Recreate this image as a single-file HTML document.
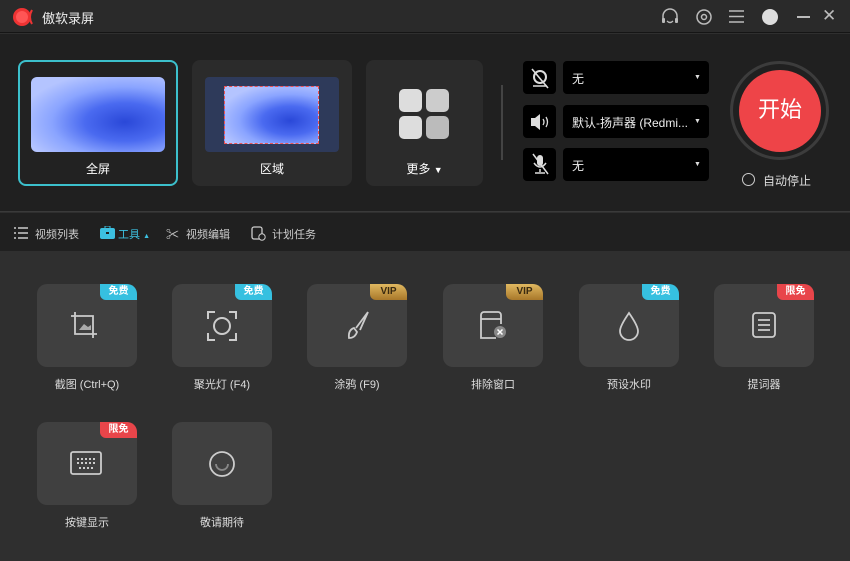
<!DOCTYPE html><html><head><meta charset="utf-8"><style>
*{margin:0;padding:0;box-sizing:border-box}
body{width:850px;height:561px;background:#2f2f2f;font-family:"Liberation Sans","Noto Sans CJK SC",sans-serif;color:#ddd;position:relative;overflow:hidden;font-size:12px}
.a{position:absolute}
.title{left:0;top:0;width:850px;height:33px;background:#2a2a2a;border-bottom:1px solid #151515}
.top{left:0;top:34px;width:850px;height:178px;background:#202020;border-bottom:1px solid #3a3a3a}
.nav{left:0;top:213px;width:850px;height:38px;background:#202020}
.card{background:#2b2b2b;border-radius:8px}
.tile{width:100px;height:83px;background:#404040;border-radius:10px}
.lbl{width:100px;text-align:center;font-size:11px;color:#ddd}
.badge{position:absolute;right:0;top:0;width:37px;height:16px;border-radius:0 10px 0 6px;font-size:10px;text-align:center;line-height:16px;color:#fff;font-weight:bold}
.free{background:#36c0e0}.vip{background:linear-gradient(#e0b860,#a8782a);color:#3a2a10}.lim{background:#e8454a}
.sel{background:#000;border-radius:4px}
.ic svg{position:absolute}
.wave{background:radial-gradient(ellipse at 70% 60%,#2a48d8 0,#4a6af0 30%,#8aa4ff 55%,#b4c4ff 80%)}
</style></head><body>
<div class="a title">
 <svg class="a" style="left:12px;top:6px" width="26" height="22"><circle cx="10" cy="11" r="9" fill="#e33"/><circle cx="10" cy="11" r="6" fill="#f55"/><path d="M20 4 Q16 11 20 18" stroke="#e33" stroke-width="2" fill="none"/></svg>
 <div class="a" style="left:42px;top:8px;font-size:13px;color:#eee">傲软录屏</div>
 <svg class="a" style="left:660px;top:8px" width="20" height="18"><path d="M3 11 V8 a7 7 0 0 1 14 0 V11" stroke="#bbb" stroke-width="1.5" fill="none"/><rect x="2" y="10" width="3" height="5" rx="1" fill="#bbb"/><rect x="15" y="10" width="3" height="5" rx="1" fill="#bbb"/><path d="M7 13 q3 3 6 0" stroke="#bbb" stroke-width="1.3" fill="none"/></svg>
 <svg class="a" style="left:694px;top:7px" width="20" height="20"><circle cx="10" cy="10" r="7" stroke="#bbb" stroke-width="1.5" fill="none"/><circle cx="10" cy="10" r="2.5" stroke="#bbb" stroke-width="1.5" fill="none"/></svg>
 <svg class="a" style="left:728px;top:9px" width="17" height="15"><path d="M1 2H16M1 7.5H16M1 13H16" stroke="#bbb" stroke-width="1.5"/></svg>
 <div class="a" style="left:762px;top:9px;width:16px;height:16px;border-radius:50%;background:#ddd"></div>
 <div class="a" style="left:797px;top:16px;width:13px;height:1.5px;background:#bbb"></div>
 <div class="a" style="left:822px;top:6px;font-size:17px;color:#bbb">✕</div>
</div>
<div class="a top"></div>
<div class="a card" style="left:18px;top:60px;width:160px;height:126px;border:2px solid #3cc0cc;background:#222"></div>
<div class="a wave" style="left:31px;top:77px;width:134px;height:75px;border-radius:6px"></div>
<div class="a" style="left:18px;top:160px;width:160px;text-align:center;color:#fff">全屏</div>
<div class="a card" style="left:192px;top:60px;width:160px;height:126px"></div>
<div class="a" style="left:205px;top:77px;width:134px;height:75px;border-radius:4px;background:#2e3a5a"></div>
<div class="a wave" style="left:224px;top:86px;width:95px;height:58px;border:1px dashed #e55"></div>
<div class="a" style="left:192px;top:160px;width:160px;text-align:center;color:#fff">区域</div>
<div class="a card" style="left:366px;top:60px;width:117px;height:126px"></div>
<svg class="a" style="left:399px;top:89px" width="51" height="51"><rect x="0" y="0" width="23" height="23" rx="5" fill="#ddd"/><rect x="27" y="0" width="23" height="23" rx="5" fill="#ccc"/><rect x="0" y="27" width="23" height="23" rx="5" fill="#ddd"/><rect x="27" y="27" width="23" height="23" rx="5" fill="#bbb"/></svg>
<div class="a" style="left:366px;top:160px;width:117px;text-align:center;color:#fff">更多 <span style="font-size:9px">▼</span></div>
<div class="a" style="left:501px;top:85px;width:2px;height:75px;background:#444"></div>
<div class="a sel" style="left:523px;top:61px;width:33px;height:33px"></div>
<div class="a sel" style="left:523px;top:105px;width:33px;height:33px"></div>
<div class="a sel" style="left:523px;top:148px;width:33px;height:33px"></div>
<svg class="a" style="left:529px;top:66px" width="22" height="24"><circle cx="11" cy="11" r="6" stroke="#ddd" stroke-width="2" fill="none"/><path d="M4 20H18M3 3L19 22" stroke="#ddd" stroke-width="1.6"/></svg>
<svg class="a" style="left:529px;top:112px" width="22" height="20"><path d="M2 6H6L11 2V18L6 14H2Z" fill="#ddd"/><path d="M14 7q2 3 0 6M17 5q3 5 0 10" stroke="#ddd" stroke-width="1.3" fill="none"/></svg>
<svg class="a" style="left:529px;top:152px" width="22" height="24"><rect x="8" y="3" width="6" height="11" rx="3" fill="#ddd"/><path d="M5 11q6 8 12 0M11 17V20M6 21H16M4 2L19 22" stroke="#ddd" stroke-width="1.5" fill="none"/></svg>
<div class="a sel" style="left:563px;top:61px;width:146px;height:33px"></div>
<div class="a sel" style="left:563px;top:105px;width:146px;height:33px"></div>
<div class="a sel" style="left:563px;top:148px;width:146px;height:33px"></div>
<div class="a" style="left:572px;top:70px;color:#eee">无</div>
<div class="a" style="left:572px;top:114px;color:#eee">默认-扬声器 (Redmi...</div>
<div class="a" style="left:572px;top:157px;color:#eee">无</div>
<div class="a" style="left:694px;top:74px;font-size:7px;color:#ddd">▼</div>
<div class="a" style="left:694px;top:118px;font-size:7px;color:#ddd">▼</div>
<div class="a" style="left:694px;top:161px;font-size:7px;color:#ddd">▼</div>
<div class="a" style="left:730px;top:61px;width:99px;height:99px;border-radius:50%;border:3px solid #3c3c3c"></div>
<div class="a" style="left:739px;top:70px;width:82px;height:82px;border-radius:50%;background:#ee4448;color:#fff;font-size:22px;text-align:center;line-height:80px">开始</div>
<div class="a" style="left:742px;top:173px;width:13px;height:13px;border-radius:50%;border:1.5px solid #ccc"></div>
<div class="a" style="left:763px;top:172px;color:#ddd">自动停止</div>
<div class="a nav"></div>
<svg class="a" style="left:14px;top:227px" width="14" height="12"><path d="M0 1H2M4 1H14M0 6H2M4 6H14M0 11H2M4 11H14" stroke="#ccc" stroke-width="1.4"/></svg>
<div class="a" style="left:35px;top:226px;font-size:11px;color:#ccc">视频列表</div>
<svg class="a" style="left:100px;top:226px" width="15" height="13"><rect x="0" y="2" width="15" height="11" rx="2" fill="#3cc0e0"/><rect x="5" y="0" width="5" height="3" fill="none" stroke="#3cc0e0"/><rect x="6" y="6" width="3" height="2" fill="#202020"/></svg>
<div class="a" style="left:118px;top:226px;font-size:11px;color:#3cc0e0">工具 <span style="font-size:7px">▲</span></div>
<div class="a" style="left:166px;top:224px;font-size:13px;color:#ccc">✂</div>
<div class="a" style="left:186px;top:226px;font-size:11px;color:#ccc">视频编辑</div>
<svg class="a" style="left:251px;top:225px" width="15" height="16"><rect x="1" y="2" width="10" height="12" rx="2" stroke="#ccc" stroke-width="1.3" fill="none"/><circle cx="11" cy="12" r="3.2" fill="#202020" stroke="#ccc"/></svg>
<div class="a" style="left:272px;top:226px;font-size:11px;color:#ccc">计划任务</div>

<div class="a tile ic" style="left:37px;top:284px"><span class="badge free">免费</span><svg width="32" height="32" style="left:32px;top:26px"><path d="M6 2V24H28M2 6H24V28" stroke="#ccc" stroke-width="1.8" fill="none"/><path d="M10 20l5-6 4 3 3-2v5z" fill="#aaa"/></svg></div>
<div class="a tile ic" style="left:172px;top:284px"><span class="badge free">免费</span><svg width="32" height="32" style="left:34px;top:26px"><path d="M2 9V2H9M23 2H30V9M2 23V30H9M23 30H30V23" stroke="#ccc" stroke-width="2" fill="none"/><circle cx="16" cy="16" r="8" stroke="#ccc" stroke-width="2" fill="none"/></svg></div>
<div class="a tile ic" style="left:307px;top:284px"><span class="badge vip">VIP</span><svg width="32" height="32" style="left:35px;top:26px"><path d="M26 2L14 18M26 2l-8 18" stroke="#ccc" stroke-width="1.8" fill="none"/><path d="M12 18q-6 2-5 10q6 0 8-6z" stroke="#ccc" stroke-width="1.8" fill="none"/></svg></div>
<div class="a tile ic" style="left:443px;top:284px"><span class="badge vip">VIP</span><svg width="34" height="32" style="left:33px;top:26px"><path d="M20 28H5V5a3 3 0 0 1 3-3H22a3 3 0 0 1 3 3V14M5 9H25" stroke="#ccc" stroke-width="1.8" fill="none"/><circle cx="24" cy="22" r="6" fill="#888"/><path d="M21.5 19.5l5 5M26.5 19.5l-5 5" stroke="#fff" stroke-width="1.5"/></svg></div>
<div class="a tile ic" style="left:579px;top:284px"><span class="badge free">免费</span><svg width="32" height="32" style="left:36px;top:26px"><path d="M14 3Q5 16 5 21a9 9 0 0 0 18 0Q23 16 14 3Z" stroke="#ccc" stroke-width="1.8" fill="none"/></svg></div>
<div class="a tile ic" style="left:714px;top:284px"><span class="badge lim">限免</span><svg width="32" height="32" style="left:37px;top:26px"><rect x="2" y="3" width="22" height="24" rx="3" stroke="#ccc" stroke-width="1.8" fill="none"/><path d="M7 10H19M7 15H19M7 20H19" stroke="#ccc" stroke-width="1.8"/></svg></div>
<div class="a tile ic" style="left:37px;top:422px"><span class="badge lim">限免</span><svg width="36" height="32" style="left:32px;top:26px"><rect x="2" y="4" width="30" height="22" rx="2" stroke="#ccc" stroke-width="1.8" fill="none"/><path d="M8 11H26M8 15H26M10 20H24" stroke="#ccc" stroke-width="2" stroke-dasharray="2 2"/></svg></div>
<div class="a tile ic" style="left:172px;top:422px"><svg width="32" height="32" style="left:34px;top:26px"><circle cx="16" cy="16" r="12" stroke="#ccc" stroke-width="1.8" fill="none"/><path d="M10 16a6 6 0 0 0 12 0" stroke="#888" stroke-width="1.8" fill="none"/></svg></div>
<div class="a lbl" style="left:37px;top:376px">截图 (Ctrl+Q)</div>
<div class="a lbl" style="left:172px;top:376px">聚光灯 (F4)</div>
<div class="a lbl" style="left:307px;top:376px">涂鸦 (F9)</div>
<div class="a lbl" style="left:443px;top:376px">排除窗口</div>
<div class="a lbl" style="left:579px;top:376px">预设水印</div>
<div class="a lbl" style="left:714px;top:376px">提词器</div>
<div class="a lbl" style="left:37px;top:514px">按键显示</div>
<div class="a lbl" style="left:172px;top:514px">敬请期待</div>
</body></html>
